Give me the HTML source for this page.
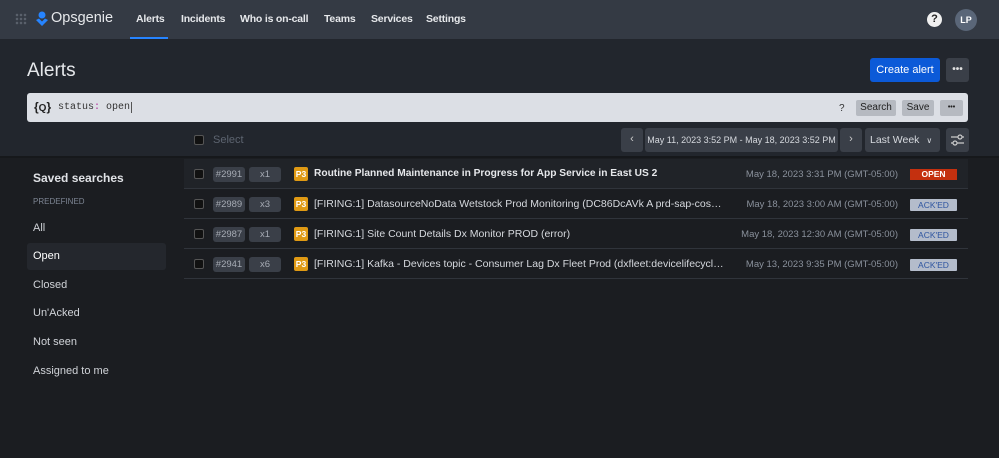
<!DOCTYPE html>
<html><head><style>
*{margin:0;padding:0;box-sizing:border-box}
body{width:999px;height:458px;overflow:hidden;background:#1b1d21;font-family:"Liberation Sans",sans-serif;color:#dfe1e6;position:relative;font-size:12px}
.a{position:absolute}
.nav{left:0;top:0;width:999px;height:39px;background:#343a44}
.nav span.l{position:absolute;top:13px;font-size:10.5px;font-weight:bold;color:#e6e8eb;letter-spacing:-0.2px}
.hdr{left:0;top:39px;width:999px;height:117px;background:#22262d}
.btn{background:#3a3f48;border-radius:3px}
.row{left:184px;width:784px;height:30px;border-bottom:1px solid #30343b}
.cb{width:10px;height:10px;background:#111;border:1px solid #555;border-radius:2px}
.tag{background:#3a3f48;border-radius:3px;color:#a6abb4;font-size:9.5px;text-align:center;line-height:15px;height:15px}
.p3{width:14px;height:14px;background:#e09a14;border-radius:2px;color:#fff;font-size:8.5px;font-weight:bold;text-align:center;line-height:14px}
.side{font-size:11px;color:#d0d3d8}
.t{left:314px;font-size:10.5px;color:#d6d9de;white-space:nowrap;overflow:hidden;text-overflow:ellipsis;width:410px}
.d{right:101px;font-size:9.5px;color:#8a919c;white-space:nowrap}
.ack{left:910px;width:47px;height:12px;background:#b4bccb;color:#2e55a0;font-size:8.5px;text-align:center;line-height:12px;border-radius:1px}
</style></head><body>
<div class="a nav">
 <div class="a" style="left:15px;top:13px;width:12px;height:12px;background:radial-gradient(circle,#59606b 1.2px,transparent 1.4px) 0 0/4px 4px"></div>
 <svg class="a" style="left:35px;top:11px" width="14" height="16" viewBox="0 0 14 16"><circle cx="7" cy="4" r="3.5" fill="#2684ff"/><path d="M1 9 L7 15 L13 9 L10 7.5 L7 10.5 L4 7.5Z" fill="#2684ff"/></svg>
 <span class="a" style="left:51px;top:10px;font-size:14.5px;color:#e6e8eb">Opsgenie</span>
 <span class="l" style="left:136px">Alerts</span>
 <div class="a" style="left:130px;top:37px;width:38px;height:2px;background:#2684ff"></div>
 <span class="l" style="left:181px">Incidents</span>
 <span class="l" style="left:240px">Who is on-call</span>
 <span class="l" style="left:324px">Teams</span>
 <span class="l" style="left:371px">Services</span>
 <span class="l" style="left:426px">Settings</span>
 <div class="a" style="left:927px;top:12px;width:15px;height:15px;border-radius:50%;background:#f0f0f0;color:#222;font-weight:bold;font-size:11px;text-align:center;line-height:15px">?</div>
 <div class="a" style="left:955px;top:9px;width:22px;height:22px;border-radius:50%;background:#5a6678;color:#fff;font-weight:bold;font-size:9px;text-align:center;line-height:22px">LP</div>
</div>
<div class="a hdr"></div>
<div class="a" style="left:27px;top:60px;font-size:19px;color:#e6e8eb">Alerts</div>
<div class="a" style="left:870px;top:58px;width:70px;height:24px;background:#0c5ad8;border-radius:3px;color:#fff;font-size:11px;text-align:center;line-height:24px">Create alert</div>
<div class="a btn" style="left:946px;top:58px;width:23px;height:24px;color:#ddd;text-align:center;line-height:24px;font-weight:bold;font-size:10px">•••</div>
<div class="a" style="left:27px;top:93px;width:941px;height:29px;background:#dcdfe5;border-radius:3px"></div>
<div class="a" style="left:34px;top:100px;font-weight:bold;font-size:12px;color:#222">{<span style="font-size:10px">Q</span>}</div>
<div class="a" style="left:58px;top:102px;font-family:'Liberation Mono',monospace;font-size:10px;color:#333">status<span style="color:#b0329a">:</span> open<span style="border-left:1px solid #555;margin-left:1px"></span></div>
<div class="a" style="left:839px;top:103px;font-size:10px;color:#333">?</div>
<div class="a" style="left:856px;top:100px;width:40px;height:16px;background:#b6bac1;border-radius:2px;color:#222;font-size:10px;text-align:center;line-height:16px">Search</div>
<div class="a" style="left:902px;top:100px;width:32px;height:16px;background:#b6bac1;border-radius:2px;color:#222;font-size:10px;text-align:center;line-height:16px">Save</div>
<div class="a" style="left:940px;top:100px;width:23px;height:16px;background:#b6bac1;border-radius:2px;color:#222;font-size:7px;text-align:center;line-height:16px;font-weight:bold">•••</div>
<div class="a cb" style="left:194px;top:135px"></div>
<div class="a" style="left:213px;top:134px;color:#5d6470;font-size:11px">Select</div>
<div class="a btn" style="left:621px;top:128px;width:22px;height:24px;text-align:center;line-height:23px;color:#ccc;font-size:11px">‹</div>
<div class="a btn" style="left:645px;top:128px;width:193px;height:24px;text-align:center;line-height:24px;color:#d6d9de;font-size:9px;white-space:nowrap">May 11, 2023 3:52 PM - May 18, 2023 3:52 PM</div>
<div class="a btn" style="left:840px;top:128px;width:22px;height:24px;text-align:center;line-height:23px;color:#ccc;font-size:11px">›</div>
<div class="a btn" style="left:865px;top:128px;width:75px;height:24px;line-height:24px;color:#d6d9de;font-size:10.5px;padding-left:5px;white-space:nowrap">Last Week <span style="font-size:8px;margin-left:4px">∨</span></div>
<svg class="a btn" style="left:946px;top:128px" width="23" height="24" viewBox="0 0 23 24"><path d="M5 9h13M5 15h13" stroke="#ccc" stroke-width="1.3"/><circle cx="14" cy="9" r="2" fill="#3a3f48" stroke="#ccc" stroke-width="1.2"/><circle cx="9" cy="15" r="2" fill="#3a3f48" stroke="#ccc" stroke-width="1.2"/></svg>
<div class="a" style="left:0;top:156px;width:999px;height:2px;background:#16181b"></div>

<div class="a" style="left:33px;top:171px;font-size:12px;font-weight:bold;color:#e0e2e6">Saved searches</div>
<div class="a" style="left:33px;top:197px;font-size:8px;color:#7d8593">PREDEFINED</div>
<div class="a" style="left:27px;top:243px;width:139px;height:27px;background:#24272d;border-radius:3px"></div>
<div class="a side" style="left:33px;top:222px">All</div>
<div class="a side" style="left:33px;top:250px;color:#fff">Open</div>
<div class="a side" style="left:33px;top:279px">Closed</div>
<div class="a side" style="left:33px;top:307px">Un'Acked</div>
<div class="a side" style="left:33px;top:336px">Not seen</div>
<div class="a side" style="left:33px;top:365px">Assigned to me</div>

<div class="a row" style="top:159px;background:#202328"></div>
<div class="a row" style="top:189px"></div>
<div class="a row" style="top:219px"></div>
<div class="a row" style="top:249px"></div>

<div class="a cb" style="left:194px;top:169px"></div><div class="a tag" style="left:213px;top:167px;width:32px">#2991</div><div class="a tag" style="left:249px;top:167px;width:32px">x1</div><div class="a p3" style="left:294px;top:167px">P3</div>
<div class="a t" style="top:168px;font-weight:bold;color:#e6e8eb;font-size:10.2px">Routine Planned Maintenance in Progress for App Service in East US 2</div>
<div class="a d" style="top:169px">May 18, 2023 3:31 PM (GMT-05:00)</div>
<div class="a" style="left:910px;top:169px;width:47px;height:11px;background:#c4300f;color:#fff;font-size:8.5px;font-weight:bold;text-align:center;line-height:11px">OPEN</div>

<div class="a cb" style="left:194px;top:199px"></div><div class="a tag" style="left:213px;top:197px;width:32px">#2989</div><div class="a tag" style="left:249px;top:197px;width:32px">x3</div><div class="a p3" style="left:294px;top:197px">P3</div>
<div class="a t" style="top:198px">[FIRING:1] DatasourceNoData Wetstock Prod Monitoring (DC86DcAVk A prd-sap-cosdb-···</div>
<div class="a d" style="top:199px">May 18, 2023 3:00 AM (GMT-05:00)</div>
<div class="a ack" style="top:199px">ACK'ED</div>

<div class="a cb" style="left:194px;top:229px"></div><div class="a tag" style="left:213px;top:227px;width:32px">#2987</div><div class="a tag" style="left:249px;top:227px;width:32px">x1</div><div class="a p3" style="left:294px;top:227px">P3</div>
<div class="a t" style="top:228px">[FIRING:1] Site Count Details Dx Monitor PROD (error)</div>
<div class="a d" style="top:229px">May 18, 2023 12:30 AM (GMT-05:00)</div>
<div class="a ack" style="top:229px">ACK'ED</div>

<div class="a cb" style="left:194px;top:259px"></div><div class="a tag" style="left:213px;top:257px;width:32px">#2941</div><div class="a tag" style="left:249px;top:257px;width:32px">x6</div><div class="a p3" style="left:294px;top:257px">P3</div>
<div class="a t" style="top:258px">[FIRING:1] Kafka - Devices topic - Consumer Lag Dx Fleet Prod (dxfleet:devicelifecycle api···</div>
<div class="a d" style="top:259px">May 13, 2023 9:35 PM (GMT-05:00)</div>
<div class="a ack" style="top:259px">ACK'ED</div>
</body></html>
